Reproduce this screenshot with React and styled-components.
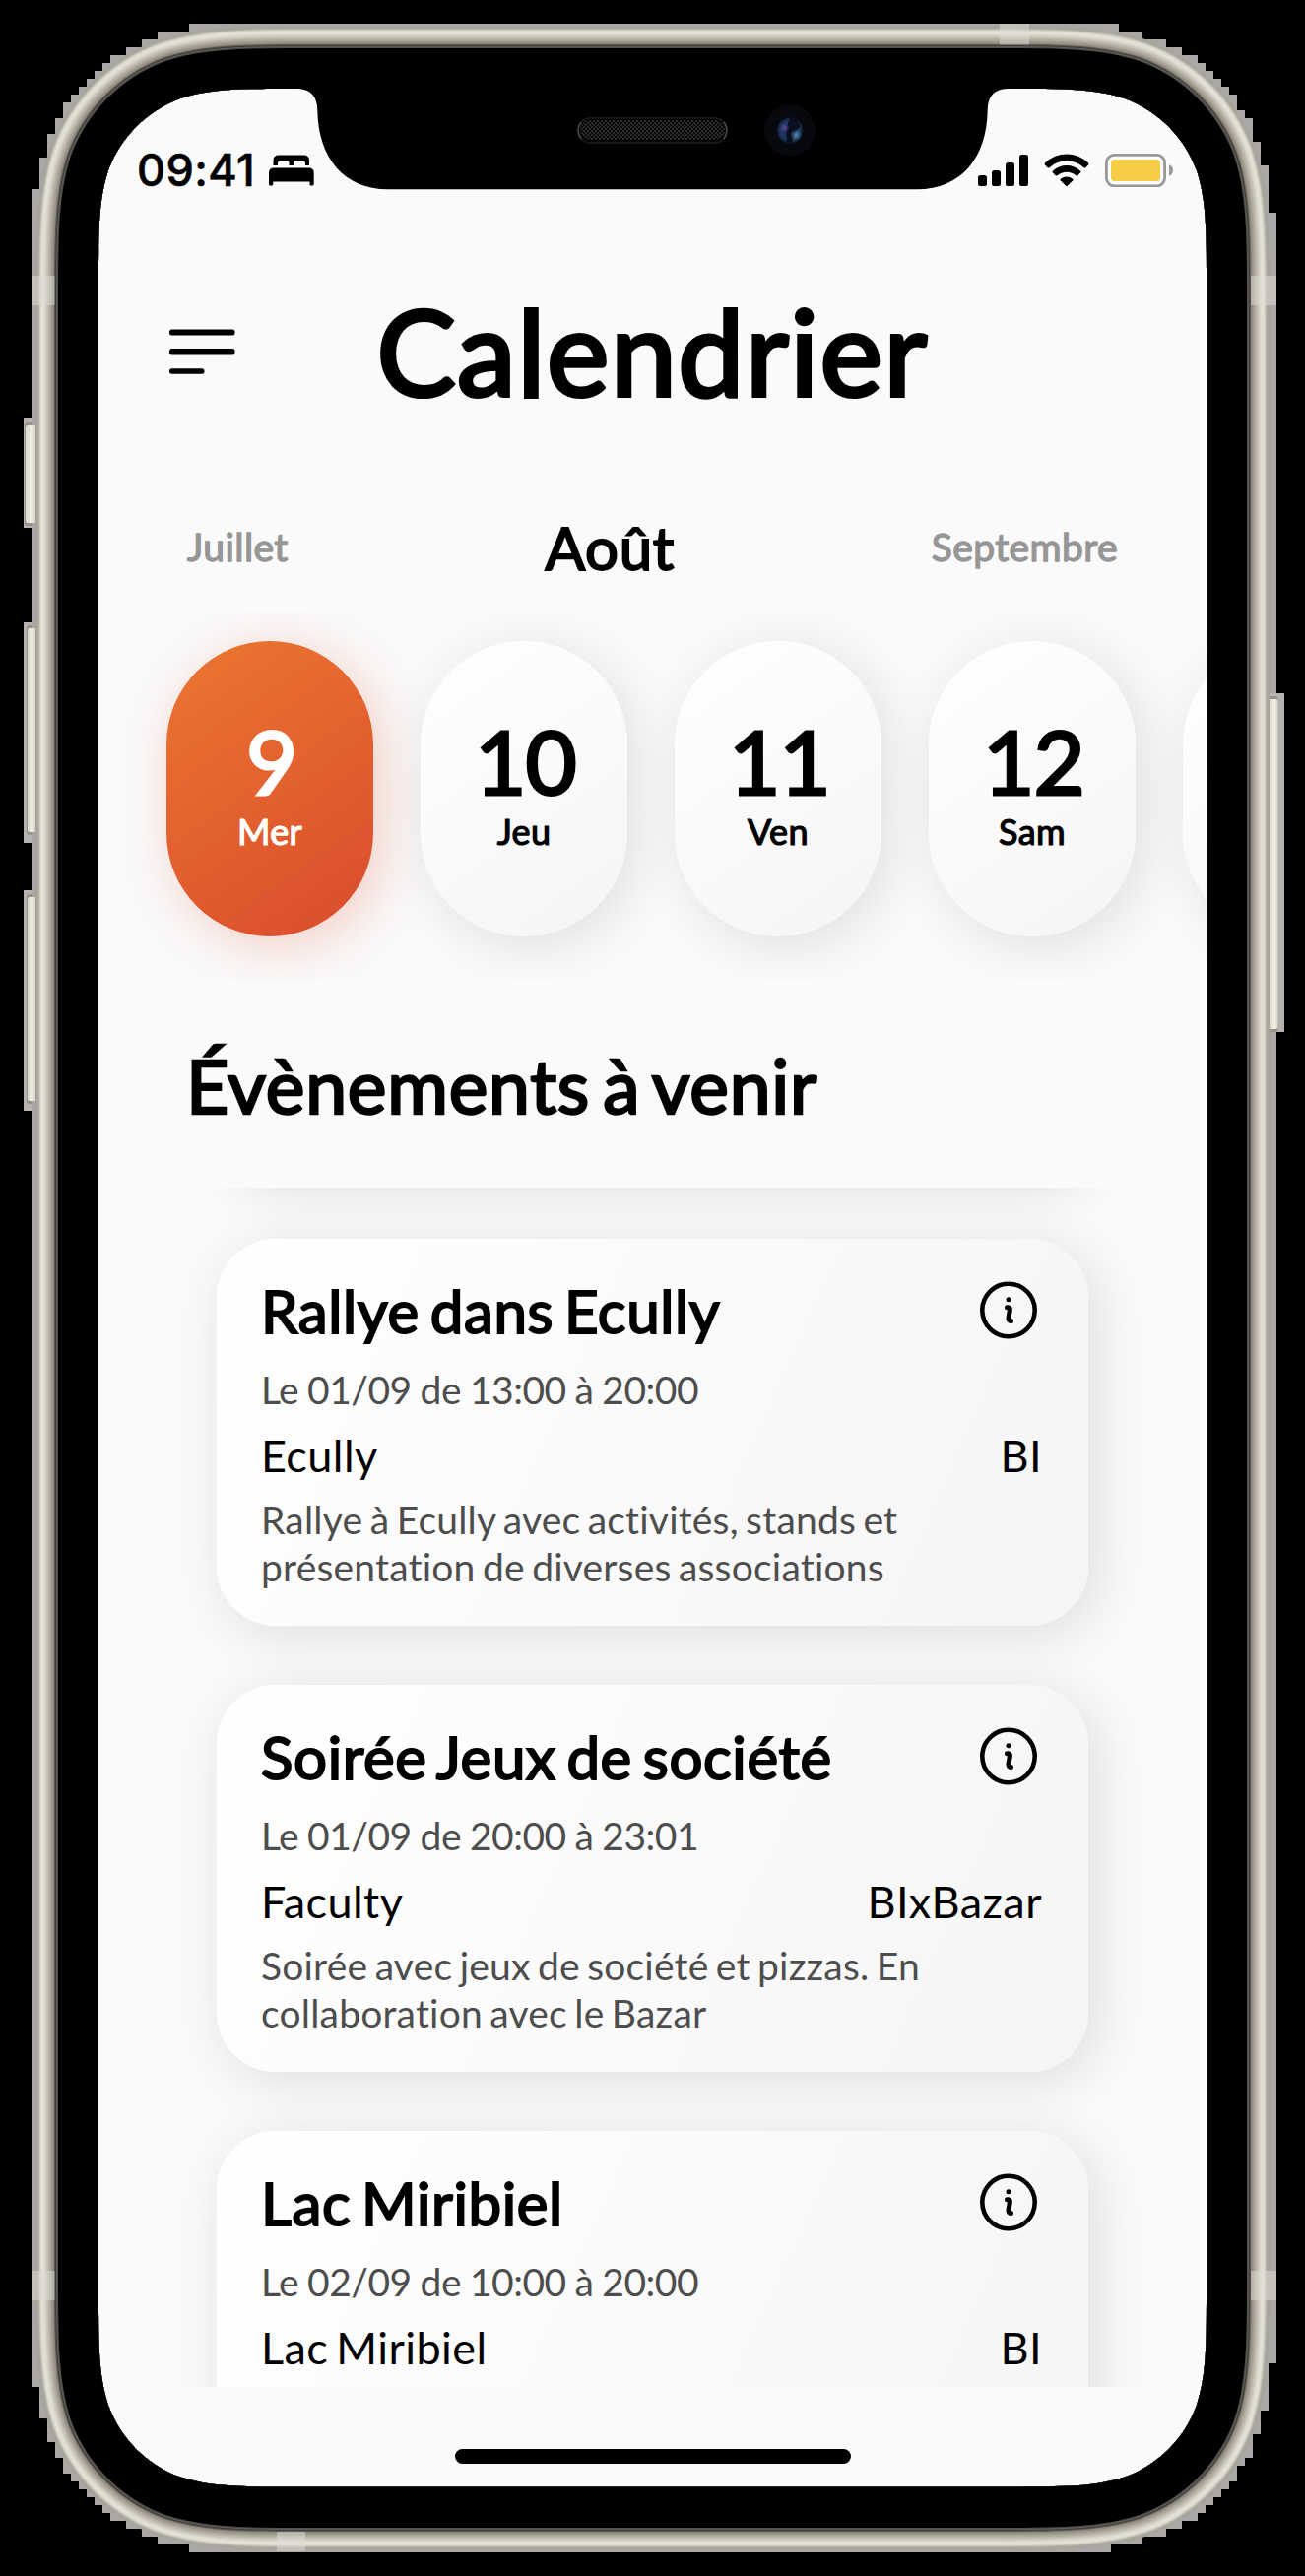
import React from "react";
import styled, { createGlobalStyle, css } from "styled-components";

const GlobalStyle = createGlobalStyle`
  html, body { margin: 0; background: #000; }
  * { box-sizing: border-box; }
`;

/* ---------- device drawing ---------- */

const cornerPath = (x0, y0, x1, y1, r) => {
  const a = 1.52866 * r, b = 1.08849 * r, c = 0.86841 * r, d = 0.63149 * r;
  const e = 0.07491 * r, f = 0.37282 * r, g = 0.16906 * r;
  return [
    `M${x0 + a} ${y0}H${x1 - a}`,
    `C${x1 - b} ${y0} ${x1 - c} ${y0} ${x1 - d} ${y0 + e}`,
    `C${x1 - f} ${y0 + g} ${x1 - g} ${y0 + f} ${x1 - e} ${y0 + d}`,
    `C${x1} ${y0 + c} ${x1} ${y0 + b} ${x1} ${y0 + a}`,
    `V${y1 - a}`,
    `C${x1} ${y1 - b} ${x1} ${y1 - c} ${x1 - e} ${y1 - d}`,
    `C${x1 - g} ${y1 - f} ${x1 - f} ${y1 - g} ${x1 - d} ${y1 - e}`,
    `C${x1 - c} ${y1} ${x1 - b} ${y1} ${x1 - a} ${y1}`,
    `H${x0 + a}`,
    `C${x0 + b} ${y1} ${x0 + c} ${y1} ${x0 + d} ${y1 - e}`,
    `C${x0 + f} ${y1 - g} ${x0 + g} ${y1 - f} ${x0 + e} ${y1 - d}`,
    `C${x0} ${y1 - c} ${x0} ${y1 - b} ${x0} ${y1 - a}`,
    `V${y0 + a}`,
    `C${x0} ${y0 + b} ${x0} ${y0 + c} ${x0 + e} ${y0 + d}`,
    `C${x0 + g} ${y0 + f} ${x0 + f} ${y0 + g} ${x0 + d} ${y0 + e}`,
    `C${x0 + c} ${y0} ${x0 + b} ${y0} ${x0 + a} ${y0}Z`,
  ].join("");
};

const SCREEN_PATH = cornerPath(100, 90, 1225, 2525.5, 132);

const METAL = [
  "#a8a39a", "#aba69d", "#aca79e", "#bab5ab", "#d0ccc2", "#dcd9d0", "#e2dfd6",
  "#e4e1d8", "#e0ddd3", "#dad6cc", "#d2cec4", "#cac6bb", "#c2bdb2", "#b9b4a8",
  "#b1aca0", "#a9a397", "#a09a8e", "#979185", "#8c867b", "#5a5751", "#3f3e3b",
  "#5d5b56", "#504f4b",
];

const EDGE =
  "M192 24H1136V32H1160V40H1184V48H1200V56H1216V64H1224V72H1232V80H1240V88H1248V96H1256V112H1264V120H1272V144H1280V168H1288V216H1296V2400H1288V2448H1280V2472H1272V2496H1264V2504H1256V2520H1248V2528H1240V2536H1232V2544H1224V2552H1216V2560H1200V2568H1184V2576H1160V2584H1128V2592H192V2584H160V2576H144V2568H128V2560H112V2552H104V2544H96V2536H88V2528H80V2520H72V2512H64V2496H56V2480H48V2456H40V2424H32V192H40V160H48V136H56V120H64V104H72V96H80V88H88V80H96V72H104V64H112V56H128V48H144V40H160V32H192Z";

const NOTCH =
  "M300 86V90C315 90 322 97 322.3 112C323 160 349 192.300 394 192.300H931C976 192.300 1002 160 1002.700 112C1003 97 1010 90 1025 90V86Z";

const SideButton = ({ x, y, w, h, edgeX, edgeY, edgeW, edgeH, fill }) => (
  <g>
    <rect x={edgeX} y={edgeY} width={edgeW} height={edgeH} fill="#b4b3b1" />
    <rect x={x} y={y} width={w} height={h} rx="3" fill="#989386" />
    <rect x={x + 1} y={y + 3} width={w - 1} height={h - 6} rx="2" fill={`url(#${fill})`} />
  </g>
);

const DeviceFrame = () => (
  <FrameSvg viewBox="0 0 1325 2616" aria-hidden="true">
    <defs>
      <linearGradient id="keyL" x1="0" x2="1">
        <stop offset="0" stopColor="#dedace" />
        <stop offset="0.35" stopColor="#f1eee5" />
        <stop offset="1" stopColor="#d3cfc3" />
      </linearGradient>
      <linearGradient id="keyR" x1="1" x2="0">
        <stop offset="0" stopColor="#dedace" />
        <stop offset="0.35" stopColor="#f1eee5" />
        <stop offset="1" stopColor="#d3cfc3" />
      </linearGradient>
      <pattern id="mesh" width="4" height="4" patternUnits="userSpaceOnUse">
        <rect width="4" height="4" fill="#080808" />
        <rect width="2" height="2" fill="#2b2b2b" />
        <rect x="2" y="2" width="2" height="2" fill="#2b2b2b" />
      </pattern>
      <radialGradient id="lens" cx="0.5" cy="0.5" r="0.5">
        <stop offset="0" stopColor="#1a2048" />
        <stop offset="0.7" stopColor="#1d3a66" />
        <stop offset="1" stopColor="#121d33" />
      </radialGradient>
      <radialGradient id="glow">
        <stop offset="0" stopColor="#5d9bc4" />
        <stop offset="1" stopColor="#5d9bc4" stopOpacity="0" />
      </radialGradient>
      <radialGradient id="violet">
        <stop offset="0" stopColor="#6a4a94" />
        <stop offset="1" stopColor="#6a4a94" stopOpacity="0" />
      </radialGradient>
      <clipPath id="hole" clipPathUnits="userSpaceOnUse">
        <path clipRule="evenodd" d={`M0 0H1325V2616H0Z${SCREEN_PATH}`} />
      </clipPath>
    </defs>
    <g clipPath="url(#hole)">
      <rect width="1325" height="2616" fill="#000" />
      <SideButton x={25} y={429} w={13} h={105} edgeX={24} edgeY={424} edgeW={14} edgeH={112} fill="keyL" />
      <SideButton x={27} y={635} w={11} h={213} edgeX={24} edgeY={632} edgeW={14} edgeH={224} fill="keyL" />
      <SideButton x={27} y={908} w={11} h={213} edgeX={24} edgeY={904} edgeW={14} edgeH={224} fill="keyL" />
      <path d={EDGE} fill="#a9a8a6" />
      <SideButton x={1286} y={707} w={11.500} h={341} edgeX={1286} edgeY={704} edgeW={18} edgeH={344} fill="keyR" />
      <rect x="28" y="432" width="9" height="99" fill="url(#keyL)" />
      <rect x="29" y="638" width="8" height="207" fill="url(#keyL)" />
      <rect x="29" y="911" width="8" height="207" fill="url(#keyL)" />
      {METAL.map((color, i) => (
        <path key={i} d={cornerPath(36 + i, 26 + i, 1289 - i, 2590 - i, 196 - i)} fill={color} />
      ))}
      <path d={cornerPath(59, 49, 1266, 2567, 173)} fill="#000" />
      <g fill="#dedbd3" opacity="0.5">
        <rect x="32" y="280" width="23.500" height="30" />
        <rect x="1270" y="280" width="26" height="30" />
        <rect x="1015" y="24" width="30" height="21.500" />
        <rect x="32" y="2306" width="23.500" height="30" />
        <rect x="1270" y="2306" width="26" height="30" />
        <rect x="281" y="2571" width="29" height="20" />
      </g>
    </g>
    <path d={NOTCH} fill="#000" />
    <rect x="587" y="120" width="151" height="25" rx="12.500" fill="#000" stroke="#181818" strokeWidth="2" />
    <rect x="589" y="122" width="147" height="20" rx="10" fill="url(#mesh)" />
    <path d="M590 124Q584 132 590 141M735 124Q741 132 735 141" fill="none" stroke="#4a4a4a" strokeWidth="1.500" />
    <circle cx="802" cy="132.300" r="26" fill="#07090f" />
    <circle cx="802" cy="132.500" r="13" fill="url(#lens)" />
    <path d="M802 120Q812 120 812 129Q806 134 804 145H799Q797 130 802 120Z" fill="#05060f" opacity="0.8" />
    <circle cx="808" cy="137" r="6" fill="url(#glow)" opacity="0.8" />
    <circle cx="797" cy="130" r="5" fill="url(#violet)" opacity="0.8" />
  </FrameSvg>
);

/* ---------- icons ---------- */

const BedIcon = () => (
  <svg width="46" height="32" viewBox="0 0 46 32">
    <path d="M4.500 11V6Q4.500 0.500 10 0.500H35.500Q41 0.500 41 6V11H37V9Q37 6 34 6H27Q25.200 6 25.200 8V11H20.500V8Q20.500 6 18.500 6H12Q9 6 9 9V11Z" />
    <path d="M0 30V18.500Q0 13.500 5 13.500H40.500Q45.700 13.500 45.700 18.500V30Q45.700 31.500 44 31.500H43Q41.500 31.500 41.500 30V27.500H4.300V30Q4.300 31.500 3 31.500H1.500Q0 31.500 0 30Z" />
  </svg>
);

const SignalIcon = () => (
  <svg width="51" height="32" viewBox="0 0 51 32">
    <rect x="0" y="21" width="9" height="11" rx="2.600" />
    <rect x="14" y="16" width="9" height="16" rx="2.600" />
    <rect x="28" y="8" width="9" height="24" rx="2.600" />
    <rect x="42" y="0" width="9" height="32" rx="2.600" />
  </svg>
);

const WifiIcon = () => (
  <svg width="46" height="34" viewBox="0 0 46 34">
    <path d="M1 11.500Q0 10.500 1 9.500Q10.300 0.500 23 0.500T45 9.500Q46 10.500 45 11.500L42.300 14.200Q41.500 15 40.500 14.200Q32.500 7.300 23 7.300T5.500 14.200Q4.500 15 3.700 14.200Z" />
    <path d="M8.800 19.300Q8 18.500 8.800 17.700Q14.800 12 23 12T37.200 17.700Q38 18.500 37.200 19.300L34.300 22.200Q33.500 23 32.500 22.200Q28.300 18.700 23 18.700T13.500 22.200Q12.500 23 11.700 22.200Z" />
    <path d="M16.700 27.200Q16 26.400 16.800 25.700Q19.500 23.500 23 23.500T29.200 25.700Q30 26.400 29.300 27.200L23.800 32.800Q23 33.500 22.200 32.800Z" />
  </svg>
);

const BatteryIcon = () => (
  <svg width="70" height="34" viewBox="0 0 70 34">
    <rect x="1.400" y="1.400" width="59.200" height="31.400" rx="8" fill="#fdfdfd" stroke="#98989a" strokeWidth="2.800" />
    <rect x="6" y="6" width="50" height="22" rx="4" fill="#f5ce46" />
    <path d="M65 11.300Q69 13 69 17T65 22.700Z" fill="#98989a" />
  </svg>
);

const MenuIcon = () => (
  <svg width="70" height="50" viewBox="0 0 70 50">
    <rect x="2" y="1.500" width="66.500" height="6" rx="2.500" />
    <rect x="2" y="21" width="66.500" height="6.500" rx="2.500" />
    <rect x="2" y="41.200" width="35.500" height="5.600" rx="2.500" />
  </svg>
);

const InfoIcon = () => (
  <svg width="60" height="60" viewBox="0 0 60 60" fill="none" stroke="#000">
    <circle cx="30" cy="29.500" r="26.700" strokeWidth="4.600" />
    <circle cx="30" cy="18.700" r="2.500" fill="#000" stroke="none" />
    <path d="M28.500 26.700H29.500Q31.800 26.700 31.300 30L30 37Q29.600 40.500 32.500 40.500" strokeWidth="5" strokeLinecap="round" />
  </svg>
);

/* ---------- layout ---------- */

const heavy = css`
  -webkit-text-stroke: 0.034em currentColor;
`;

const Phone = styled.div`
  position: relative;
  width: 1325px;
  height: 2616px;
  padding: 90px 100px;
  background: #000;
  overflow: hidden;
`;

const FrameSvg = styled.svg`
  position: absolute;
  inset: 0;
  width: 1325px;
  height: 2616px;
  pointer-events: none;
`;

const Screen = styled.main`
  display: flex;
  flex-direction: column;
  width: 1125px;
  height: 2436px;
  background: #fafafa;
  color: #000;
  font-family: Lato, sans-serif;
  font-variant-ligatures: none;
  overflow: hidden;
`;

const StatusBar = styled.div`
  display: flex;
  justify-content: space-between;
  align-items: flex-start;
  height: 144px;
  padding: 65px 33px 0 39px;
`;

const StatusGroup = styled.div`
  display: flex;
  align-items: center;
  height: 36px;
  gap: ${(p) => p.$gap}px;
`;

const Clock = styled.span`
  font: 500 45px/36px Inter, sans-serif;
  letter-spacing: 0.4px;
  -webkit-text-stroke: 0.6px currentColor;
`;

const Header = styled.header`
  display: grid;
  grid-template-columns: 1fr auto 1fr;
  align-items: center;
  height: 247px;
  padding: 0 70px 0 70px;
`;

const MenuButton = styled.button`
  display: flex;
  width: 70px;
  padding: 0;
  border: 0;
  background: none;
`;

const Title = styled.h1`
  margin: 0;
  padding-bottom: 4px;
  font-size: 120px;
  font-weight: 400;
  line-height: 144px;
  letter-spacing: 0.0125em;
  ${heavy}
`;

const Months = styled.nav`
  display: flex;
  flex: none;
  justify-content: space-between;
  align-items: center;
  height: 70px;
  margin: 40px 0 30px;
  padding: 0 90px 0 90px;
`;

const Month = styled.span`
  padding-bottom: ${(p) => (p.$current ? 0 : 2)}px;
  font-size: ${(p) => (p.$current ? 60 : 39)}px;
  line-height: ${(p) => (p.$current ? 72 : 48)}px;
  letter-spacing: 0.0105em;
  color: ${(p) => (p.$current ? "#000" : "#969696")};
  ${heavy}
`;

const Days = styled.div`
  display: flex;
  flex: none;
  gap: 48px;
  height: 375px;
  padding: 30px 0 45px 69px;
  overflow: hidden;
`;

const Day = styled.div`
  display: flex;
  flex: none;
  flex-direction: column;
  align-items: center;
  width: 210px;
  height: 300px;
  padding-top: 69px;
  border-radius: 105px;
  color: ${(p) => (p.$active ? "#fff" : "#000")};
  background: ${(p) =>
    p.$active
      ? "linear-gradient(145deg, #eb7731, #da4b2c)"
      : "linear-gradient(145deg, #fff, #f5f5f5)"};
  box-shadow: 9px 9px 54px
    ${(p) => (p.$active ? "rgba(220, 77, 43, 0.26)" : "rgba(0, 0, 0, 0.108)")};
`;

const DayNumber = styled.span`
  padding-left: 3px;
  font-size: 90px;
  line-height: 104px;
  letter-spacing: -1px;
  ${heavy}
`;

const DayName = styled.span`
  font-size: 36px;
  line-height: 41px;
  letter-spacing: 0.01em;
  ${heavy}
`;

const SectionTitle = styled.h2`
  flex: none;
  height: 90px;
  margin: 61px 0 59px;
  padding-left: 89px;
  font-size: 75px;
  font-weight: 400;
  line-height: 90px;
  letter-spacing: 0.0105em;
  word-spacing: -0.09em;
  ${heavy}
`;

const EventList = styled.section`
  display: flex;
  flex-direction: column;
  flex: none;
  gap: 60px;
  height: 1218px;
  padding: 0 120px;
  overflow: hidden;
`;

const Card = styled.article`
  flex: none;
  height: 393px;
  margin-top: ${(p) => (p.$scrolledOut ? "-401px" : "0")};
  padding: 37px 45px 0;
  border-radius: 60px;
  background: linear-gradient(113.9deg, #fff, #f5f5f5);
  box-shadow: 9px 9px 54px rgba(0, 0, 0, 0.115);
`;

const CardRow = styled.div`
  display: flex;
  justify-content: space-between;
  align-items: center;
`;

const CardTitle = styled.h3`
  margin: 0;
  font-size: 60px;
  font-weight: 400;
  line-height: 72px;
  letter-spacing: 0.0105em;
  word-spacing: -0.085em;
  ${heavy}
`;

const InfoButton = styled.button`
  display: flex;
  margin: 0 6px 0 0;
  padding: 0;
  border: 0;
  background: none;
`;

const DateLine = styled.p`
  margin: 20px 0 16px;
  font-size: 39px;
  line-height: 48px;
  letter-spacing: -0.5px;
  word-spacing: -0.6px;
  color: #4d4d4d;
`;

const Place = styled.span`
  font-size: 45px;
  line-height: 54px;
  letter-spacing: 0.01em;
  word-spacing: -0.09em;

  & + & {
    margin-right: 2px;
  }
`;

const Description = styled.p`
  width: 700px;
  margin: 14px 0 0;
  font-size: 39px;
  line-height: 48px;
  letter-spacing: 0.2px;
  word-spacing: -2.8px;
  color: #4d4d4d;
`;

const HomeBar = styled.div`
  flex: none;
  width: 402px;
  height: 15px;
  margin: 63px auto 0;
  border-radius: 8px;
  background: #000;
`;

const DAYS = [
  { n: 9, name: "Mer", active: true },
  { n: 10, name: "Jeu" },
  { n: 11, name: "Ven" },
  { n: 12, name: "Sam" },
  {},
];

const EVENTS = [
  {
    title: "Rallye dans Ecully",
    date: "Le 01/09 de 13:00 à 20:00",
    place: "Ecully",
    host: "BI",
    text: ["Rallye à Ecully avec activités, stands et", "présentation de diverses associations"],
  },
  {
    title: "Soirée Jeux de société",
    date: "Le 01/09 de 20:00 à 23:01",
    place: "Faculty",
    host: "BIxBazar",
    text: ["Soirée avec jeux de société et pizzas. En", "collaboration avec le Bazar"],
  },
  {
    title: "Lac Miribiel",
    date: "Le 02/09 de 10:00 à 20:00",
    place: "Lac Miribiel",
    host: "BI",
    text: [],
  },
];

export default function App() {
  return (
    <Phone>
      <GlobalStyle />
      <Screen>
        <StatusBar>
          <StatusGroup $gap={14}>
            <Clock>09:41</Clock>
            <BedIcon />
          </StatusGroup>
          <StatusGroup $gap={16}>
            <SignalIcon />
            <WifiIcon />
            <BatteryIcon />
          </StatusGroup>
        </StatusBar>
        <Header>
          <MenuButton aria-label="Menu">
            <MenuIcon />
          </MenuButton>
          <Title>Calendrier</Title>
        </Header>
        <Months>
          <Month>Juillet</Month>
          <Month $current>Août</Month>
          <Month>Septembre</Month>
        </Months>
        <Days>
          {DAYS.map((day, i) => (
            <Day key={i} $active={day.active}>
              {day.n && <DayNumber>{day.n}</DayNumber>}
              {day.name && <DayName>{day.name}</DayName>}
            </Day>
          ))}
        </Days>
        <SectionTitle>Évènements à venir</SectionTitle>
        <EventList>
          <Card $scrolledOut />
          {EVENTS.map((event) => (
            <Card key={event.title}>
              <CardRow>
                <CardTitle>{event.title}</CardTitle>
                <InfoButton aria-label="Informations">
                  <InfoIcon />
                </InfoButton>
              </CardRow>
              <DateLine>{event.date}</DateLine>
              <CardRow>
                <Place>{event.place}</Place>
                <Place>{event.host}</Place>
              </CardRow>
              <Description>
                {event.text.map((line, i) => (
                  <React.Fragment key={line}>
                    {i > 0 && <br />}
                    {line}
                  </React.Fragment>
                ))}
              </Description>
            </Card>
          ))}
        </EventList>
        <HomeBar />
      </Screen>
      <DeviceFrame />
    </Phone>
  );
}
